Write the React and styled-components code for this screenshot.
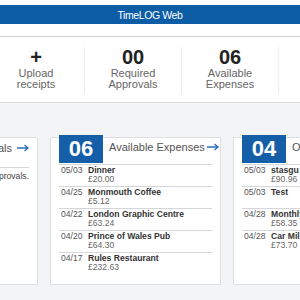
import React from "react";
import styled, { createGlobalStyle } from "styled-components";

const GlobalStyle = createGlobalStyle`
  html, body {
    margin: 0;
    padding: 0;
    background: #f3f4f6;
    font-family: "Liberation Sans", Arial, sans-serif;
    overflow: hidden;
  }
  * { box-sizing: border-box; }
`;

const Page = styled.div`
  width: 300px;
  height: 300px;
  overflow: hidden;
  background: #f3f4f6;
`;

const Top = styled.div`
  background: #fff;
  padding: 5px 0 12px;
  border-bottom: 1px solid #cfd1d4;
`;

const TitleBar = styled.div`
  height: 19px;
  background: #0c5ca6;
  color: #fff;
  display: flex;
  align-items: center;
  justify-content: center;
  font-size: 10.5px;
  letter-spacing: -0.4px;
`;

const Stats = styled.div`
  background: #fff;
  border-bottom: 1px solid #d6d8db;
  padding: 9px 0;
  display: flex;
  margin-left: -12px;
  width: 420px;
`;

const Stat = styled.div`
  width: 97px;
  height: 47px;
  flex: none;
  display: flex;
  flex-direction: column;
  align-items: center;
  border-right: 1px dotted #dde1e4;
`;

const StatNum = styled.div`
  font-size: 20px;
  font-weight: bold;
  line-height: 22px;
  color: #222;
`;

const StatLabel = styled.div`
  font-size: 11px;
  line-height: 10.5px;
  color: #666;
  text-align: center;
`;

const Cards = styled.div`
  display: flex;
  gap: 12px;
  padding-top: 34px;
  margin-left: -133px;
`;

const Card = styled.div`
  width: 171px;
  height: 148px;
  flex: none;
  background: #fff;
  border: 1px solid #dcdee1;
  padding: 0 8px;
`;

const CardHead = styled.div`
  display: flex;
  align-items: flex-start;
  height: 30px;
  margin-top: ${(p) => (p.$boxed ? "-3px" : "0")};
  border-bottom: 1px solid #d4d6d9;
  justify-content: ${(p) => (p.$boxed ? "flex-start" : "flex-end")};
`;

const CountBox = styled.div`
  width: 44px;
  height: 28px;
  background: #155fa8;
  color: #fff;
  font-size: 22px;
  font-weight: bold;
  display: flex;
  align-items: center;
  justify-content: center;
  margin-right: 6px;
  flex: none;
`;

const HeadTitle = styled.div`
  display: flex;
  align-items: center;
  gap: ${(p) => (p.$wide ? "5px" : "2px")};
  padding-top: ${(p) => (p.$wide ? "4px" : "6px")};
  font-size: 11px;
  line-height: 12px;
  color: #555;
  white-space: nowrap;
`;

const Row = styled.div`
  display: flex;
  padding: 1px 0 2px;
  border-bottom: 1px solid #d4d6d9;
  font-size: 8.6px;
  line-height: 9px;
  &:last-child { border-bottom: none; }
`;

const Date = styled.div`
  width: 29px;
  flex: none;
  padding-left: 2px;
  color: #555;
`;

const Info = styled.div`
  display: flex;
  flex-direction: column;
  white-space: nowrap;
`;

const Name = styled.div`
  font-weight: bold;
  color: #333;
`;

const Price = styled.div`
  color: #666;
  min-height: 9px;
`;

const Note = styled.div`
  font-size: 8.6px;
  line-height: 9px;
  padding-top: 4px;
  color: #444;
  white-space: nowrap;
  text-align: right;
`;

const Arrow = () => (
  <svg width="12" height="8" viewBox="0 0 12 8">
    <path d="M0 4H11M7.5 1L11 4L7.5 7" stroke="#2b6fb6" strokeWidth="1.3" fill="none" />
  </svg>
);

const stats = [
  { num: "+", label: ["Upload", "receipts"] },
  { num: "00", label: ["Required", "Approvals"] },
  { num: "06", label: ["Available", "Expenses"] },
  { num: "02", label: ["Open", "Claims"] },
];

const available = [
  ["05/03", "Dinner", "£20.00"],
  ["04/25", "Monmouth Coffee", "£5.12"],
  ["04/22", "London Graphic Centre", "£63.24"],
  ["04/20", "Prince of Wales Pub", "£64.30"],
  ["04/17", "Rules Restaurant", "£232.63"],
];

const open = [
  ["05/03", "stasgu", "£90.96"],
  ["05/03", "Test", ""],
  ["04/28", "Monthly Travelcard", "£58.35"],
  ["04/28", "Car Mileage", "£73.70"],
];

const ListCard = ({ count, title, items }) => (
  <Card>
    <CardHead $boxed>
      <CountBox>{count}</CountBox>
      <HeadTitle>
        {title}
        <Arrow />
      </HeadTitle>
    </CardHead>
    {items.map(([d, n, p], i) => (
      <Row key={i}>
        <Date>{d}</Date>
        <Info>
          <Name>{n}</Name>
          <Price>{p}</Price>
        </Info>
      </Row>
    ))}
  </Card>
);

const App = () => (
  <Page>
    <GlobalStyle />
    <Top>
      <TitleBar>TimeLOG Web</TitleBar>
    </Top>
    <Stats>
      {stats.map((s) => (
        <Stat key={s.label[0]}>
          <StatNum>{s.num}</StatNum>
          <StatLabel>{s.label[0]}</StatLabel>
          <StatLabel>{s.label[1]}</StatLabel>
        </Stat>
      ))}
    </Stats>
    <Cards>
      <Card>
        <CardHead>
          <HeadTitle $wide>
            Required Approvals
            <Arrow />
          </HeadTitle>
        </CardHead>
        <Note>You have no required approvals.</Note>
      </Card>
      <ListCard count="06" title="Available Expenses" items={available} />
      <ListCard count="04" title="Open Claims" items={open} />
    </Cards>
  </Page>
);

export default App;
